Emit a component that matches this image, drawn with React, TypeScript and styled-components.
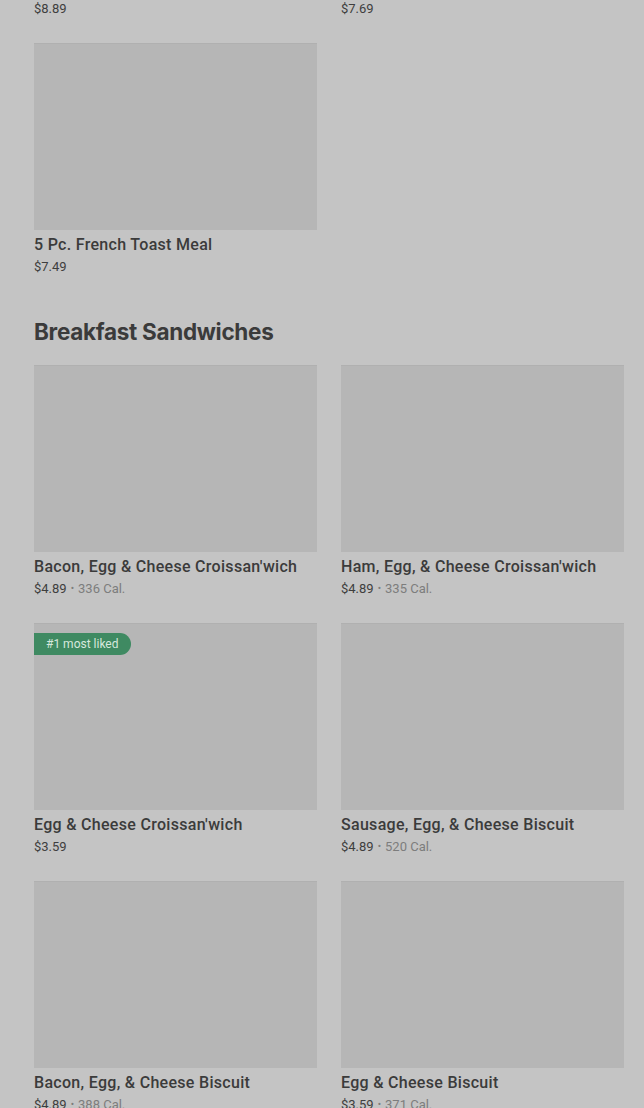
import React from 'react';
import styled, { createGlobalStyle } from 'styled-components';

interface Item {
  name: string;
  price: string;
  cal?: string;
  badge?: string;
}

const sandwiches: Item[] = [
  { name: "Bacon, Egg & Cheese Croissan'wich", price: '$4.89', cal: '336 Cal.' },
  { name: "Ham, Egg, & Cheese Croissan'wich", price: '$4.89', cal: '335 Cal.' },
  { name: "Egg & Cheese Croissan'wich", price: '$3.59', badge: '#1 most liked' },
  { name: 'Sausage, Egg, & Cheese Biscuit', price: '$4.89', cal: '520 Cal.' },
  { name: 'Bacon, Egg, & Cheese Biscuit', price: '$4.89', cal: '388 Cal.' },
  { name: 'Egg & Cheese Biscuit', price: '$3.59', cal: '371 Cal.' },
];

const GlobalStyle = createGlobalStyle`
  html, body {
    margin: 0;
    padding: 0;
    background: #c4c4c4;
    overflow: hidden;
  }
  body {
    font-family: Roboto, "Noto Sans", sans-serif;
    color: #3b3b3b;
  }
`;

const Page = styled.div`
  margin-top: -1px;
  padding: 0 20px 0 34px;
`;

const Grid = styled.div`
  display: grid;
  grid-template-columns: 283px 283px;
  column-gap: 24px;
  row-gap: 24px;
`;

const Card = styled.div`
  display: flex;
  flex-direction: column;
`;

const Thumb = styled.div`
  position: relative;
  height: 187px;
  background: #b6b6b6;
  border-top: 1px solid #b0b0b0;
  box-sizing: border-box;
`;

const Badge = styled.span`
  position: absolute;
  top: 9px;
  left: 0;
  height: 22px;
  padding: 0 12px;
  display: flex;
  align-items: center;
  background: #3f8a62;
  color: #d6e8dd;
  font-size: 12px;
  border-radius: 0 11px 11px 0;
`;

const Name = styled.div`
  padding-top: 2px;
  font-size: 16px;
  font-weight: 500;
  line-height: 25px;
  white-space: nowrap;
  letter-spacing: 0.3px;
`;

const Meta = styled.div`
  font-size: 13px;
  line-height: 20px;
  color: #3e3e3e;
`;

const Dot = styled.span`
  margin: 0 4px;
  font-size: 10px;
  color: #7d7d7d;
  vertical-align: 1px;
`;

const Cal = styled.span`
  color: #7d7d7d;
`;

const Heading = styled.h2`
  margin: 41px 0 19px;
  font-family: Inter, "Noto Sans", sans-serif;
  font-size: 22.5px;
  line-height: 28px;
  font-weight: 700;
  letter-spacing: -0.3px;
`;

const MenuCard: React.FC<{ item: Item }> = ({ item }) => (
  <Card>
    <Thumb>{item.badge && <Badge>{item.badge}</Badge>}</Thumb>
    <Name>{item.name}</Name>
    <Meta>
      {item.price}
      {item.cal && (
        <>
          <Dot>•</Dot>
          <Cal>{item.cal}</Cal>
        </>
      )}
    </Meta>
  </Card>
);

export default function App() {
  return (
    <>
      <GlobalStyle />
      <Page>
        <Grid>
          <Meta>$8.89</Meta>
          <Meta>$7.69</Meta>
          <MenuCard item={{ name: '5 Pc. French Toast Meal', price: '$7.49' }} />
        </Grid>
        <Heading>Breakfast Sandwiches</Heading>
        <Grid>
          {sandwiches.map((item, i) => (
            <MenuCard key={i} item={item} />
          ))}
        </Grid>
      </Page>
    </>
  );
}
